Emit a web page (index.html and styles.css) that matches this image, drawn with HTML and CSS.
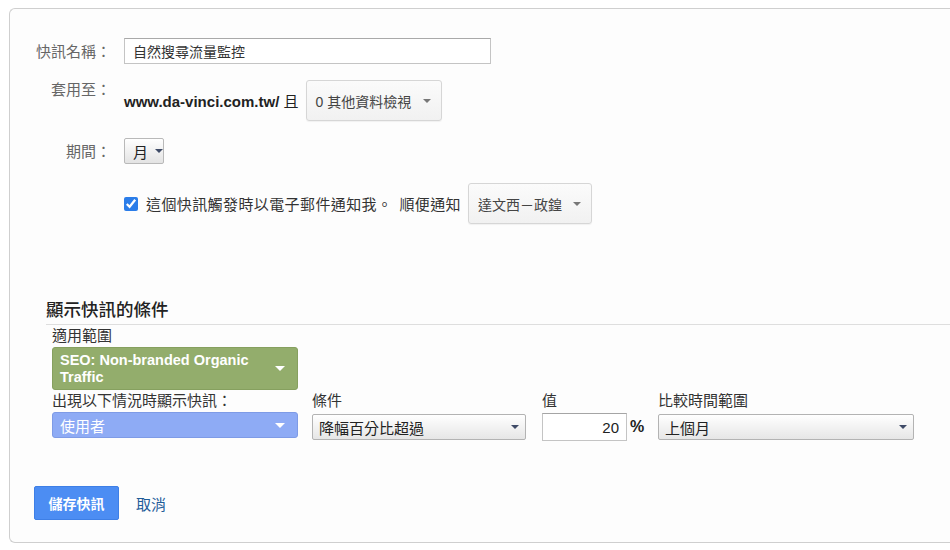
FILE: index.html
```html
<!DOCTYPE html>
<html lang="zh-TW">
<head>
<meta charset="utf-8">
<title>快訊</title>
<link rel="stylesheet" href="styles.css">
</head>
<body>
<div class="card">
  <div class="row r1">
    <label class="lbl">快訊名稱：</label>
    <input class="textbox" type="text" value="自然搜尋流量監控">
  </div>
  <div class="row r2">
    <label class="lbl lbl-top">套用至：</label>
    <div class="apply">
      <span class="site"><b>www.da-vinci.com.tw/</b> 且</span>
      <div class="dd dd-views"><span>0 其他資料檢視</span><span class="caret"></span></div>
    </div>
  </div>
  <div class="row r3">
    <label class="lbl">期間：</label>
    <div class="mini-select"><span>月</span><span class="caret dark"></span></div>
  </div>
  <div class="row r4">
    <div class="notify">
      <input class="chk" type="checkbox" checked>
      <span class="notify-text">這個快訊觸發時以電子郵件通知我。</span>
      <span class="notify-text also">順便通知</span>
      <div class="dd dd-user"><span>達文西－政鍠</span><span class="caret"></span></div>
    </div>
  </div>

  <h2 class="section-title">顯示快訊的條件</h2>

  <div class="cond">
    <div class="clabel c1r1">適用範圍</div>
    <div class="seg seg-green c1r2"><span class="seg-text">SEO: Non-branded Organic Traffic</span><span class="caret white"></span></div>
    <div class="clabel c1r3">出現以下情況時顯示快訊：</div>
    <div class="clabel c2r3">條件</div>
    <div class="clabel c3r3">值</div>
    <div class="clabel c4r3">比較時間範圍</div>
    <div class="seg seg-blue c1r4"><span class="seg-text">使用者</span><span class="caret white"></span></div>
    <div class="gsel c2r4"><span>降幅百分比超過</span><span class="caret dark"></span></div>
    <div class="value c3r4"><input class="valbox" type="text" value="20"><span class="pct">%</span></div>
    <div class="gsel c4r4"><span>上個月</span><span class="caret dark"></span></div>
  </div>

  <div class="actions">
    <button class="save">儲存快訊</button>
    <a class="cancel" href="#">取消</a>
  </div>
</div>
</body>
</html>
```

FILE: styles.css
```css
* { box-sizing: border-box; }
body {
  margin: 0;
  background: #fff;
  color: #333;
  font-family: "Liberation Sans", "Noto Sans CJK TC", sans-serif;
}
.card {
  margin: 8px 0 0 9px;
  height: 535px;
  border: 1px solid #cfcfcf;
  border-right: 0;
  border-radius: 6px 0 0 6px;
  padding-top: 29px;
  background: #fdfdfd;
}
.row {
  display: grid;
  grid-template-columns: 101px auto;
  column-gap: 13px;
  align-items: center;
}
.lbl {
  text-align: right;
  font-family: "Noto Sans CJK TC", sans-serif;
  font-size: 15px;
  line-height: 18px;
  color: #666;
}
.lbl-top { align-self: start; }
.r2 { margin-top: 16px; }
.r3 { margin-top: 17px; }
.r4 { margin-top: 19px; }
.r4 .notify { grid-column: 2; }

.textbox {
  width: 367px;
  height: 26px;
  margin: 0;
  padding: 0 8px;
  border: 1px solid #c4c4c4;
  border-top-color: #a9a9a9;
  background: #fff;
  font-family: "Noto Sans CJK TC", sans-serif;
  font-size: 14px;
  color: #333;
}

.apply { display: flex; align-items: center; gap: 8px; }
.site {
  font-size: 15px;
  color: #222;
  font-family: "Liberation Sans", "Noto Sans CJK TC", sans-serif;
}
.site b { font-weight: 700; }

.dd {
  display: flex;
  align-items: center;
  height: 41px;
  padding: 0 10px 0 8px;
  border: 1px solid #d6d6d6;
  border-radius: 3px;
  background: linear-gradient(#fbfbfb, #f1f1f1);
  box-shadow: 0 1px 1px rgba(0, 0, 0, 0.05);
  font-family: "Liberation Sans", "Noto Sans CJK TC", sans-serif;
  font-size: 14px;
  color: #444;
}
.dd .caret { margin-left: auto; }
.dd-views { width: 136px; }
.dd-user { width: 124px; padding-left: 9px; }

.caret {
  width: 0;
  height: 0;
  border-left: 4px solid transparent;
  border-right: 4px solid transparent;
  border-top: 4px solid #777;
  flex: none;
}
.caret.dark { border-top-color: #3f4b67; }
.caret.white { border-top-color: #fff; border-left-width: 5px; border-right-width: 5px; border-top-width: 5px; }

.mini-select {
  display: flex;
  align-items: center;
  gap: 7px;
  width: 40px;
  height: 26px;
  padding: 0 0 0 8px;
  border: 1px solid #b9b9b9;
  border-radius: 2px;
  background: linear-gradient(#ffffff, #e3e3e3);
  font-family: "Noto Sans CJK TC", sans-serif;
  font-size: 15px;
  color: #222;
}

.notify { display: flex; align-items: center; }
.chk {
  width: 14px;
  height: 14px;
  margin: 0 8px 0 0;
  accent-color: #2b7de9;
}
.notify-text {
  font-family: "Noto Sans CJK TC", sans-serif;
  font-size: 15px;
  letter-spacing: 0.4px;
  color: #333;
}
.notify-text.also { margin-left: 7px; margin-right: 7px; }

.section-title {
  margin: 73px 0 0 36px;
  padding-bottom: 3px;
  border-bottom: 1px solid #dedede;
  font-family: "Noto Sans CJK TC", sans-serif;
  font-size: 17.5px;
  line-height: 24px;
  font-weight: 500;
  color: #222;
}

.cond {
  margin-left: 42px;
  display: grid;
  grid-template-columns: 246px 216px 102px 256px;
  column-gap: 14px;
  align-items: start;
}
.clabel {
  font-family: "Noto Sans CJK TC", sans-serif;
  font-size: 15px;
  line-height: 20px;
  color: #333;
  white-space: nowrap;
}
.c1r1 { grid-column: 1; grid-row: 1; }
.c1r2 { grid-column: 1; grid-row: 2; }
.c1r3 { grid-column: 1; grid-row: 3; }
.c2r3 { grid-column: 2; grid-row: 3; }
.c3r3 { grid-column: 3; grid-row: 3; }
.c4r3 { grid-column: 4; grid-row: 3; }
.c1r4 { grid-column: 1; grid-row: 4; }
.c2r4 { grid-column: 2; grid-row: 4; }
.c3r4 { grid-column: 3; grid-row: 4; }
.c4r4 { grid-column: 4; grid-row: 4; }

.seg {
  display: flex;
  align-items: center;
  border-radius: 3px;
  color: #fff;
  padding: 0 12px 0 7px;
}
.seg .caret { margin-left: auto; }
.seg-green {
  margin-top: 2px;
  height: 43px;
  background: #93ad6c;
  border: 1px solid #86a05f;
}
.seg-green .seg-text {
  width: 200px;
  font-family: "Liberation Sans", sans-serif;
  font-weight: 700;
  font-size: 14.5px;
  line-height: 17px;
}
.seg-blue {
  margin-top: 2px;
  height: 26px;
  background: #8eabf5;
  border: 1px solid #7e9be6;
}
.seg-blue .seg-text {
  font-family: "Noto Sans CJK TC", sans-serif;
  font-size: 15px;
}

.gsel {
  margin-top: 4px;
  height: 26px;
  display: flex;
  align-items: center;
  padding: 0 6px 0 6px;
  border: 1px solid #b3b3b3;
  border-radius: 2px;
  background: linear-gradient(#ffffff, #e6e6e6);
  font-family: "Noto Sans CJK TC", sans-serif;
  font-size: 15px;
  color: #222;
}
.gsel .caret { margin-left: auto; }
.c2r4 { width: 214px; }

.value {
  margin-top: 3px;
  display: flex;
  align-items: center;
}
.valbox {
  width: 85px;
  height: 28px;
  margin: 0;
  padding: 0 7px 0 0;
  text-align: right;
  border: 1px solid #c4c4c4;
  border-top-color: #a5a5a5;
  background: #fff;
  font-family: "Liberation Sans", sans-serif;
  font-size: 15px;
  color: #222;
}
.pct {
  margin-left: 3px;
  font-family: "Liberation Sans", sans-serif;
  font-weight: 700;
  font-size: 16px;
  color: #222;
}

.actions {
  margin: 45px 0 0 24px;
  display: flex;
  align-items: center;
}
.save {
  width: 85px;
  height: 34px;
  border: 1px solid #3e7fe6;
  border-radius: 2px;
  background: #4c8df3;
  color: #fff;
  font-family: "Noto Sans CJK TC", sans-serif;
  font-size: 14px;
  font-weight: 700;
  padding: 0;
}
.cancel {
  margin-left: 17px;
  font-family: "Noto Sans CJK TC", sans-serif;
  font-size: 15px;
  color: #1f5c99;
  text-decoration: none;
}
```
